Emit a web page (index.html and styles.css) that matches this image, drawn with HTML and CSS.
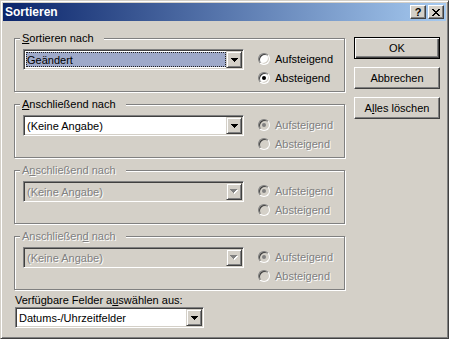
FILE: index.html
```html
<!DOCTYPE html>
<html lang="de">

<head>
    <meta charset="utf-8">
    <title>Sortieren</title>
    <link rel="stylesheet" href="styles.css">
</head>

<body>

<div class="window">
    <!-- Titelleiste -->
    <div class="titlebar">
        <span class="title">Sortieren</span>
        <div class="caption-buttons">
            <span class="cap-btn">?</span>
            <span class="cap-btn">
                <svg width="8" height="7" viewBox="0 0 8 7">
                    <path d="M0 0h2v1H0z M6 0h2v1H6z M1 1h2v1H1z M5 1h2v1H5z M2 2h4v1H2z M3 3h2v1H3z M2 4h4v1H2z M1 5h2v1H1z M5 5h2v1H5z M0 6h2v1H0z M6 6h2v1H6z" fill="#000"/>
                </svg>
            </span>
        </div>
    </div>

    <div class="client">
        <div class="main">
            <!-- Gruppe 1 -->
            <fieldset class="group">
                <legend><u>S</u>ortieren nach</legend>
                <div class="row">
                    <div class="combo">
                        <span class="combo-text selected">Geändert</span>
                        <span class="drop">
                            <svg width="7" height="4" viewBox="0 0 7 4"><path d="M0 0h7v1h-1v1h-1v1h-1v1h-1v-1h-1v-1h-1v-1h-1z" fill="#000"/></svg>
                        </span>
                    </div>
                    <div class="radios">
                        <div class="radio-row"><span class="radio"></span>Aufsteigend</div>
                        <div class="radio-row"><span class="radio checked"></span>Absteigend</div>
                    </div>
                </div>
            </fieldset>

            <!-- Gruppe 2 -->
            <fieldset class="group">
                <legend><u>A</u>nschließend nach</legend>
                <div class="row">
                    <div class="combo">
                        <span class="combo-text">(Keine Angabe)</span>
                        <span class="drop">
                            <svg width="7" height="4" viewBox="0 0 7 4"><path d="M0 0h7v1h-1v1h-1v1h-1v1h-1v-1h-1v-1h-1v-1h-1z" fill="#000"/></svg>
                        </span>
                    </div>
                    <div class="radios disabled">
                        <div class="radio-row"><span class="radio checked"></span>Aufsteigend</div>
                        <div class="radio-row"><span class="radio"></span>Absteigend</div>
                    </div>
                </div>
            </fieldset>

            <!-- Gruppe 3 -->
            <fieldset class="group">
                <legend class="disabled">A<u>n</u>schließend nach</legend>
                <div class="row">
                    <div class="combo off">
                        <span class="combo-text disabled">(Keine Angabe)</span>
                        <span class="drop">
                            <svg width="8" height="5" viewBox="0 0 8 5"><path d="M1 1h7v1h-1v1h-1v1h-1v1h-1v-1h-1v-1h-1v-1h-1z" fill="#fff"/><path d="M0 0h7v1h-1v1h-1v1h-1v1h-1v-1h-1v-1h-1v-1h-1z" fill="#808080"/></svg>
                        </span>
                    </div>
                    <div class="radios disabled">
                        <div class="radio-row"><span class="radio checked"></span>Aufsteigend</div>
                        <div class="radio-row"><span class="radio"></span>Absteigend</div>
                    </div>
                </div>
            </fieldset>

            <!-- Gruppe 4 -->
            <fieldset class="group">
                <legend class="disabled">Anschließen<u>d</u> nach</legend>
                <div class="row">
                    <div class="combo off">
                        <span class="combo-text disabled">(Keine Angabe)</span>
                        <span class="drop">
                            <svg width="8" height="5" viewBox="0 0 8 5"><path d="M1 1h7v1h-1v1h-1v1h-1v1h-1v-1h-1v-1h-1v-1h-1z" fill="#fff"/><path d="M0 0h7v1h-1v1h-1v1h-1v1h-1v-1h-1v-1h-1v-1h-1z" fill="#808080"/></svg>
                        </span>
                    </div>
                    <div class="radios disabled">
                        <div class="radio-row"><span class="radio checked"></span>Aufsteigend</div>
                        <div class="radio-row"><span class="radio"></span>Absteigend</div>
                    </div>
                </div>
            </fieldset>

            <div class="field-label">Verfügbare Felder a<u>u</u>swählen aus:</div>
            <div class="combo wide">
                <span class="combo-text">Datums-/Uhrzeitfelder</span>
                <span class="drop">
                    <svg width="7" height="4" viewBox="0 0 7 4"><path d="M0 0h7v1h-1v1h-1v1h-1v1h-1v-1h-1v-1h-1v-1h-1z" fill="#000"/></svg>
                </span>
            </div>
        </div>

        <!-- Schaltflächen -->
        <div class="buttons">
            <div class="btn default">OK</div>
            <div class="btn">Abbrechen</div>
            <div class="btn">A<u>l</u>les löschen</div>
        </div>
    </div>
</div>

</body>

</html>
```

FILE: styles.css
```css
/* Grundlayout */
body
{
    margin: 0;
    background: #d4d0c8;
    font: 11px "Liberation Sans", Arial, sans-serif;
    color: #000;
}

u
{
    text-underline-offset: 1px;
}

.window
{
    width: 449px;
    height: 339px;
    box-sizing: border-box;
    display: flex;
    flex-direction: column;
    padding: 2px;
    background: #d4d0c8;
    border: 1px solid;
    border-color: #d4d0c8 #404040 #404040 #d4d0c8;
    box-shadow: inset 1px 1px 0 #fff, inset -1px -1px 0 #808080;
}

/* Titelleiste */
.titlebar
{
    height: 18px;
    display: flex;
    align-items: center;
    justify-content: space-between;
    padding: 0 2px;
    background: linear-gradient(to right, #0a246a, #a6caf0);
}

.title
{
    color: #fff;
    font-weight: bold;
    font-size: 12px;
}

.caption-buttons
{
    display: flex;
    gap: 2px;
}

.cap-btn
{
    width: 16px;
    height: 14px;
    box-sizing: border-box;
    display: flex;
    align-items: center;
    justify-content: center;
    background: #d4d0c8;
    border: 1px solid;
    border-color: #fff #404040 #404040 #fff;
    box-shadow: inset -1px -1px 0 #808080;
    font-weight: bold;
    font-size: 11px;
    line-height: 12px;
}

/* Inhalt */
.client
{
    flex: 1;
    display: flex;
}

.main
{
    display: flex;
    flex-direction: column;
    padding: 11px 0 0 11px;
}

.group
{
    width: 331px;
    box-sizing: border-box;
    min-width: 0;
    margin: 0;
    padding: 4px 8px 4px 8px;
    border: 1px solid #808080;
    box-shadow: 1px 1px 0 #fff, inset 1px 1px 0 #fff;
}

.group + .group
{
    margin-top: 6px;
}

.group legend
{
    margin-left: -3px;
    padding: 0 10px 0 2px;
    line-height: 13px;
    background: #d4d0c8;
}

.row
{
    display: flex;
    align-items: flex-start;
}

/* Kombinationsfeld */
.combo
{
    width: 221px;
    height: 21px;
    box-sizing: border-box;
    display: flex;
    padding: 1px;
    background: #fff;
    border: 1px solid;
    border-color: #808080 #fff #fff #808080;
    box-shadow: inset 1px 1px 0 #404040, inset -1px -1px 0 #d4d0c8;
}

.combo.off
{
    background: #d4d0c8;
}

.combo.wide
{
    width: 189px;
    margin-left: 1px;
}

.combo-text
{
    flex: 1;
    display: flex;
    align-items: center;
    padding-left: 2px;
    white-space: nowrap;
}

.combo-text.selected
{
    margin: 1px 0 1px 1px;
    padding-left: 0;
    background: #9ea9c9;
    border: 1px dotted #202020;
}

.drop
{
    width: 16px;
    height: 17px;
    box-sizing: border-box;
    display: flex;
    align-items: center;
    justify-content: center;
    background: #d4d0c8;
    border: 1px solid;
    border-color: #d4d0c8 #404040 #404040 #d4d0c8;
    box-shadow: inset 1px 1px 0 #fff, inset -1px -1px 0 #808080;
}

/* Optionsfelder */
.radios
{
    margin-left: 14px;
    display: flex;
    flex-direction: column;
}

.radio-row
{
    height: 19px;
    display: flex;
    align-items: center;
    gap: 5px;
}

.radio
{
    width: 12px;
    height: 12px;
    box-sizing: border-box;
    display: flex;
    align-items: center;
    justify-content: center;
    border-radius: 50%;
    background: #fff;
    border: 1px solid;
    border-color: #808080 #fff #fff #808080;
    box-shadow: inset 1px 1px 0 #404040, inset -1px -1px 0 #d4d0c8;
}

.radio.checked::after
{
    content: "";
    width: 4px;
    height: 4px;
    border-radius: 50%;
    background: #000;
}

.disabled
{
    color: #808080;
    text-shadow: 1px 1px 0 #fff;
}

.disabled .radio
{
    background: #d4d0c8;
}

.disabled .radio.checked::after
{
    background: #808080;
}

.field-label
{
    margin: 4px 0 0 1px;
    line-height: 13px;
}

/* Schaltflächen rechts */
.buttons
{
    display: flex;
    flex-direction: column;
    gap: 8px;
    margin-left: 9px;
    padding-top: 16px;
}

.btn
{
    width: 86px;
    height: 22px;
    box-sizing: border-box;
    display: flex;
    align-items: center;
    justify-content: center;
    background: #d4d0c8;
    border: 1px solid;
    border-color: #fff #404040 #404040 #fff;
    box-shadow: inset -1px -1px 0 #808080;
}

.btn.default
{
    border-color: #000;
    box-shadow: inset 1px 1px 0 #fff, inset -1px -1px 0 #404040, inset -2px -2px 0 #808080;
}
```
